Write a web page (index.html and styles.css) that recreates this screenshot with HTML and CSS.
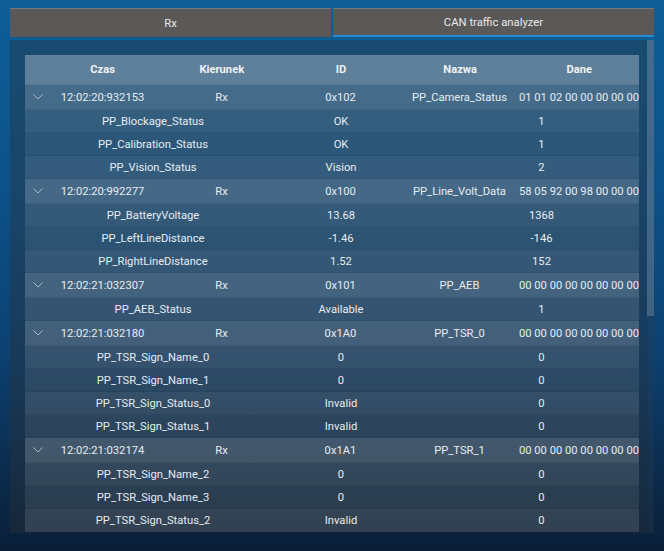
FILE: index.html
```html
<!DOCTYPE html>
<html lang="pl">
<head>
<meta charset="utf-8">
<title>CAN traffic analyzer</title>
<link rel="stylesheet" href="styles.css">
</head>
<body>
<div class="tabs">
  <div class="tab">Rx</div>
  <div class="tab active">CAN traffic analyzer</div>
</div>
<div class="main">
  <div class="panel">
    <div class="table">
      <div class="row head">
        <div></div><div>Czas</div><div>Kierunek</div><div>ID</div><div>Nazwa</div><div>Dane</div>
      </div>

      <div class="row parent">
        <div class="chev"><svg width="10" height="6" viewBox="0 0 10 6"><path d="M0.5 0.5 L5 5 L9.5 0.5" fill="none" stroke="#a9b8c6" stroke-width="1"/></svg></div>
        <div>12:02:20:932153</div><div>Rx</div><div>0x102</div><div>PP_Camera_Status</div><div>01 01 02 00 00 00 00 00</div>
      </div>
      <div class="row child a"><div>PP_Blockage_Status</div><div>OK</div><div class="raw">1</div></div>
      <div class="row child b"><div>PP_Calibration_Status</div><div>OK</div><div class="raw">1</div></div>
      <div class="row child a"><div>PP_Vision_Status</div><div>Vision</div><div class="raw">2</div></div>

      <div class="row parent">
        <div class="chev"><svg width="10" height="6" viewBox="0 0 10 6"><path d="M0.5 0.5 L5 5 L9.5 0.5" fill="none" stroke="#a9b8c6" stroke-width="1"/></svg></div>
        <div>12:02:20:992277</div><div>Rx</div><div>0x100</div><div>PP_Line_Volt_Data</div><div>58 05 92 00 98 00 00 00</div>
      </div>
      <div class="row child a"><div>PP_BatteryVoltage</div><div>13.68</div><div class="raw">1368</div></div>
      <div class="row child b"><div>PP_LeftLineDistance</div><div>-1.46</div><div class="raw">-146</div></div>
      <div class="row child a"><div>PP_RightLineDistance</div><div>1.52</div><div class="raw">152</div></div>

      <div class="row parent">
        <div class="chev"><svg width="10" height="6" viewBox="0 0 10 6"><path d="M0.5 0.5 L5 5 L9.5 0.5" fill="none" stroke="#a9b8c6" stroke-width="1"/></svg></div>
        <div>12:02:21:032307</div><div>Rx</div><div>0x101</div><div>PP_AEB</div><div>00 00 00 00 00 00 00 00</div>
      </div>
      <div class="row child a"><div>PP_AEB_Status</div><div>Available</div><div class="raw">1</div></div>

      <div class="row parent">
        <div class="chev"><svg width="10" height="6" viewBox="0 0 10 6"><path d="M0.5 0.5 L5 5 L9.5 0.5" fill="none" stroke="#a9b8c6" stroke-width="1"/></svg></div>
        <div>12:02:21:032180</div><div>Rx</div><div>0x1A0</div><div>PP_TSR_0</div><div>00 00 00 00 00 00 00 00</div>
      </div>
      <div class="row child a"><div>PP_TSR_Sign_Name_0</div><div>0</div><div class="raw">0</div></div>
      <div class="row child b"><div>PP_TSR_Sign_Name_1</div><div>0</div><div class="raw">0</div></div>
      <div class="row child a"><div>PP_TSR_Sign_Status_0</div><div>Invalid</div><div class="raw">0</div></div>
      <div class="row child b"><div>PP_TSR_Sign_Status_1</div><div>Invalid</div><div class="raw">0</div></div>

      <div class="row parent">
        <div class="chev"><svg width="10" height="6" viewBox="0 0 10 6"><path d="M0.5 0.5 L5 5 L9.5 0.5" fill="none" stroke="#a9b8c6" stroke-width="1"/></svg></div>
        <div>12:02:21:032174</div><div>Rx</div><div>0x1A1</div><div>PP_TSR_1</div><div>00 00 00 00 00 00 00 00</div>
      </div>
      <div class="row child a"><div>PP_TSR_Sign_Name_2</div><div>0</div><div class="raw">0</div></div>
      <div class="row child b"><div>PP_TSR_Sign_Name_3</div><div>0</div><div class="raw">0</div></div>
      <div class="row child a"><div>PP_TSR_Sign_Status_2</div><div>Invalid</div><div class="raw">0</div></div>
    </div>
  </div>
  <div class="scrollbar"><div class="thumb"></div></div>
</div>
</body>
</html>
```
FILE: styles.css
```css
html, body {
  margin: 0;
  height: 100%;
}
body {
  width: 664px;
  height: 551px;
  overflow: hidden;
  font-family: Roboto, "Liberation Sans", sans-serif;
  color: #e6ecf1;
  background: linear-gradient(180deg, #0e5e97 0%, #0d5189 35%, #0c4070 65%, #0b2846 90%, #0a1e38 100%);
}
.tabs {
  display: flex;
  gap: 2px;
  padding: 8px 10px 0 10px;
}
.tab {
  flex: 1;
  height: 29px;
  line-height: 29px;
  box-sizing: border-box;
  background: #5b5858;
  text-align: center;
  font-size: 11.3px;
  color: #e9e9e9;
  border-top: 1px solid #6f7a84;
}
.tab.active {
  border-bottom: 2px solid #2a8bd0;
  line-height: 27px;
}
.main {
  display: flex;
  margin: 3px 10px 0 10px;
  height: 493px;
}
.panel {
  flex: 1;
  background: rgba(45, 50, 56, 0.38);
  padding: 15px 8px 0 15px;
  overflow: hidden;
}
.scrollbar {
  width: 7px;
  background: rgba(40, 60, 80, 0.35);
}
.thumb {
  height: 276px;
  background: rgba(120, 140, 160, 0.45);
}
.table {
  width: 614px;
  font-size: 11.2px;
}
.row {
  display: grid;
  align-items: center;
  text-align: center;
  white-space: nowrap;
  border-bottom: 1px solid rgba(0, 0, 0, 0.07);
  box-sizing: border-box;
}
.head, .parent {
  grid-template-columns: 18px repeat(5, 1fr);
}
.head {
  height: 30px;
  background: rgba(255, 255, 255, 0.3);
  font-weight: bold;
  color: #eef2f5;
}
.parent {
  height: 25px;
  background: rgba(255, 255, 255, 0.19);
}
.child {
  height: 23px;
  grid-template-columns: 256px 120px 1fr;
}
.child.a {
  background: rgba(255, 255, 255, 0.12);
}
.child.b {
  background: rgba(255, 255, 255, 0.09);
}
.chev {
  display: flex;
  justify-content: flex-end;
  align-items: center;
}
.raw {
  padding-left: 43px;
}
```
